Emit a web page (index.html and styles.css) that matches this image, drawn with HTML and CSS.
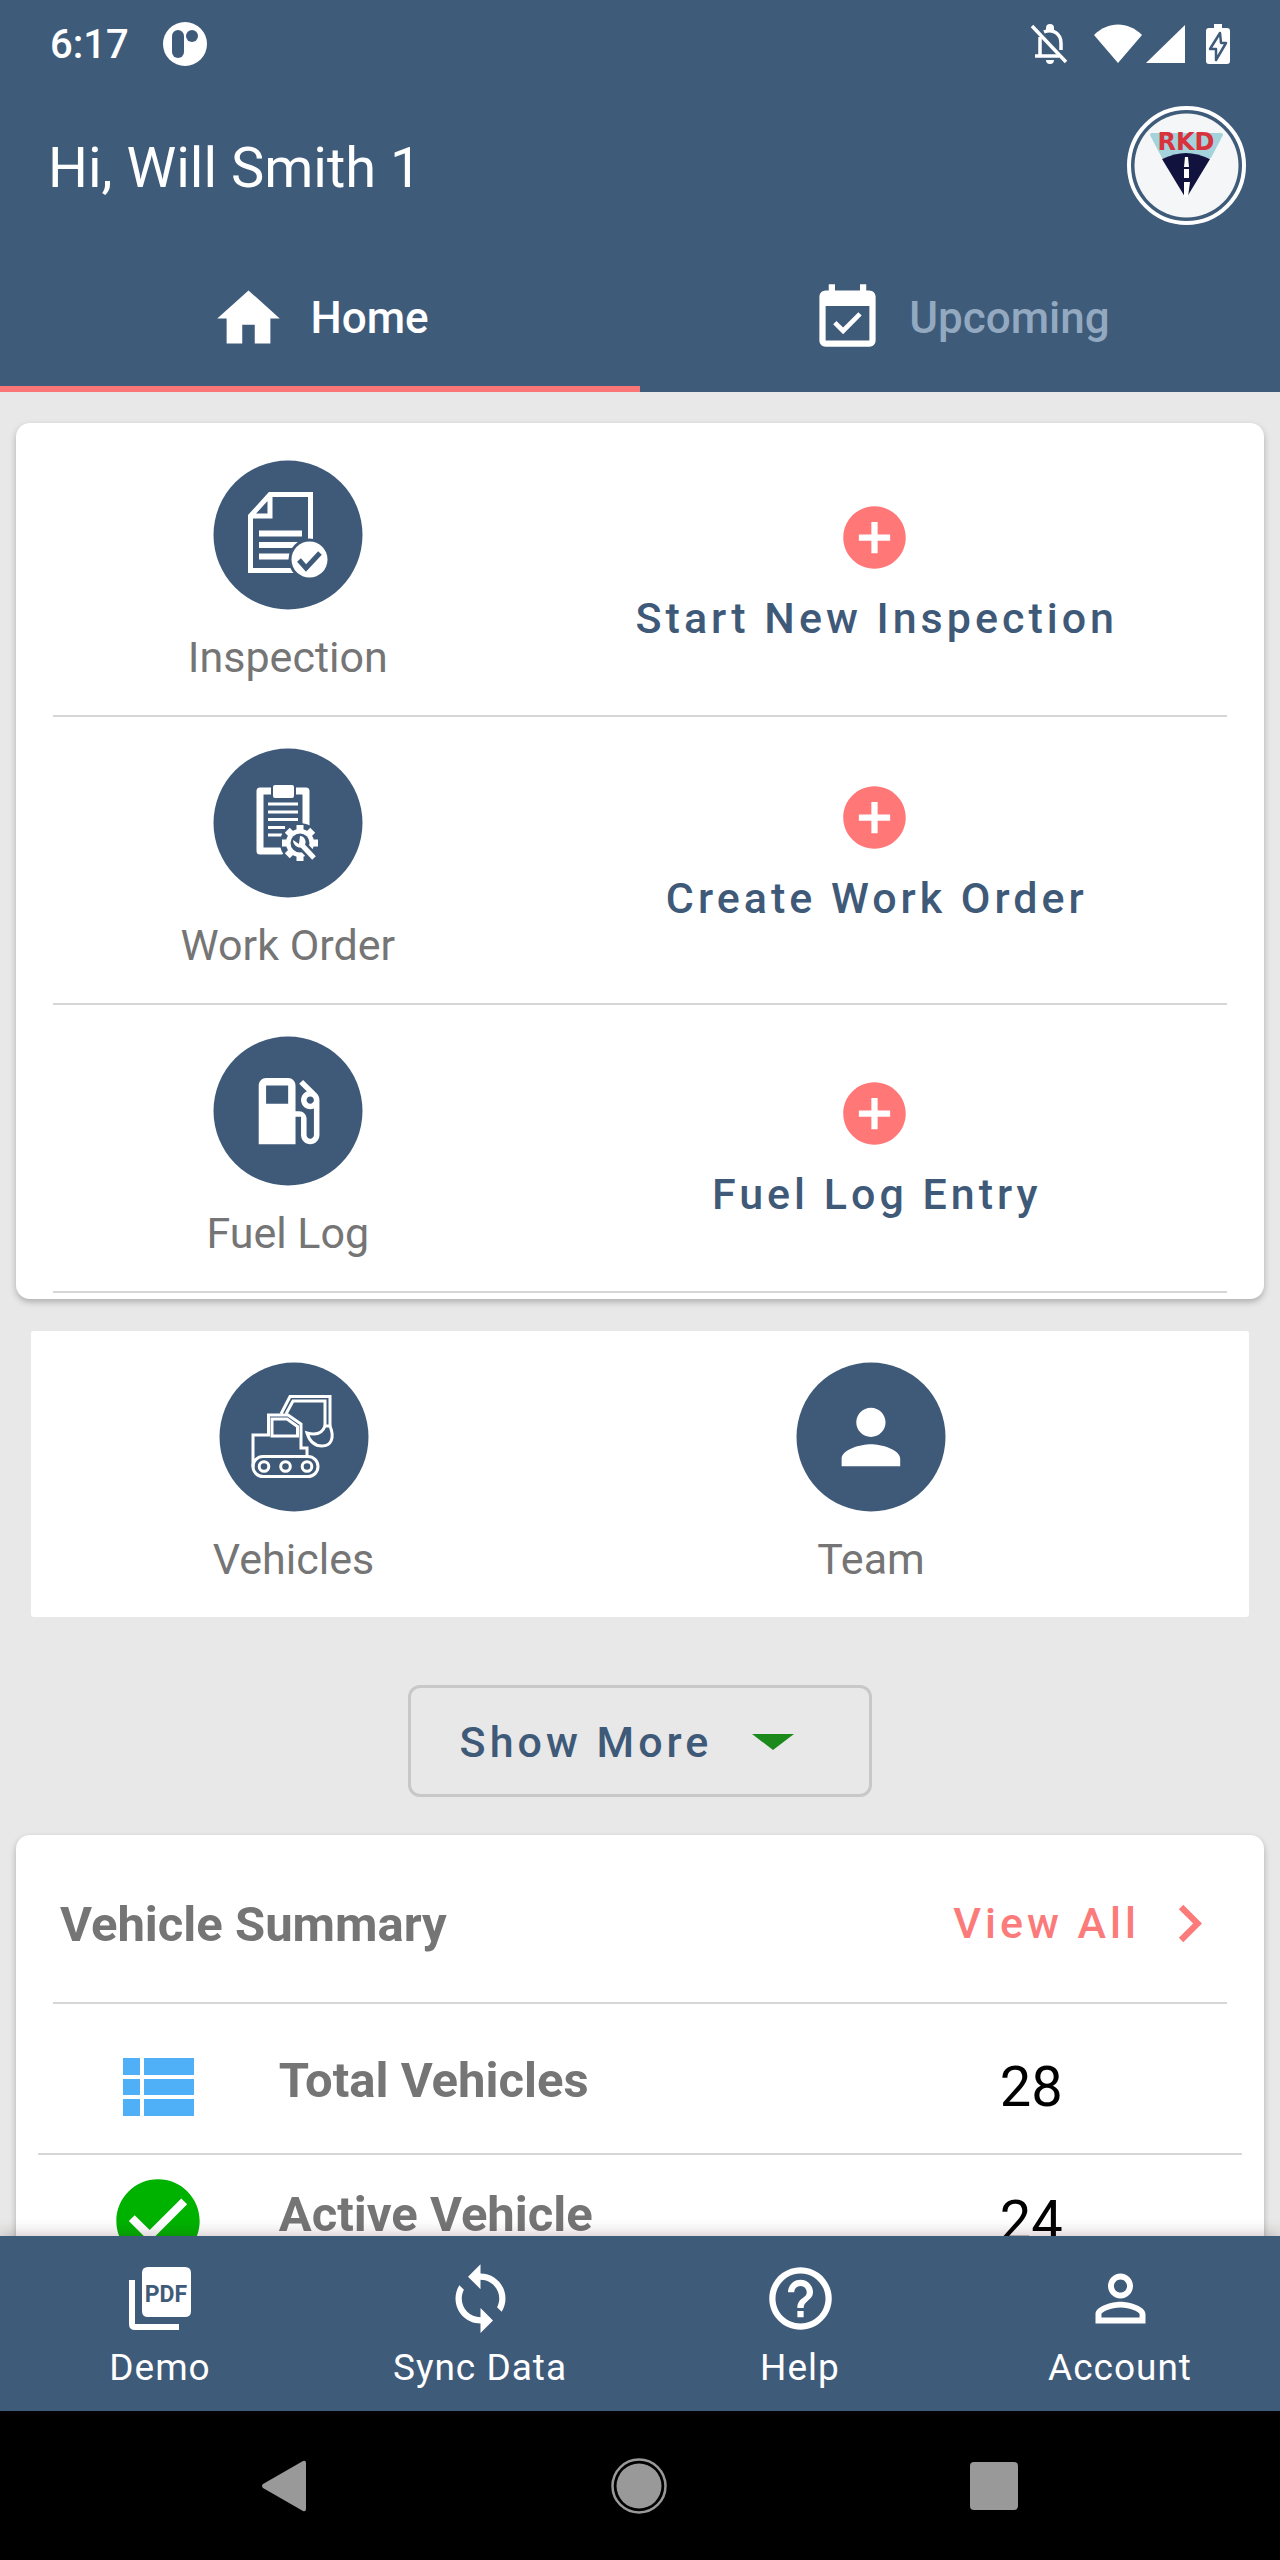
FILE: index.html
```html
<!DOCTYPE html>
<html lang="en">
<head>
<meta charset="utf-8">
<meta name="viewport" content="width=device-width, initial-scale=1">
<title>Fleet Home</title>
<link rel="stylesheet" href="styles.css">
</head>
<body>
<div class="screen">
  <header class="header">
    <div class="status">
      <div class="status-side">
        <span class="time">6:17</span>
        <svg width="44" height="44" viewBox="0 0 44 44" aria-hidden="true"><circle cx="22" cy="22" r="22" fill="#fff"/><rect x="9" y="8" width="12" height="28" rx="6" fill="#3f5b7a"/><circle cx="29" cy="14" r="6" fill="#3f5b7a"/></svg>
      </div>
      <div class="status-side status-icons">
        <svg width="38" height="40" viewBox="0 0 38 40" fill="none" stroke="#fff" stroke-width="3.5" aria-hidden="true"><path d="M2 2l34 36"/><path d="M10 13v18M5 32h24M14 8c9-4 17 2 17 11v7"/><path d="M16 4a4 4 0 0 1 8 0v3h-8zM16 36h8a4 4 0 0 1-8 0z" fill="#fff" stroke="none"/></svg>
        <svg class="wifi" width="48" height="40" viewBox="0 0 48 40" aria-hidden="true"><path d="M24 39L0 11C14-3 34-3 48 11z" fill="#fff"/></svg>
        <svg width="40" height="40" viewBox="0 0 40 40" aria-hidden="true"><path d="M39 1v38H0z" fill="#fff"/></svg>
        <svg class="battery" width="24" height="40" viewBox="0 0 24 40" aria-hidden="true"><path d="M8 0h8v4h5a3 3 0 0 1 3 3v30a3 3 0 0 1-3 3H3a3 3 0 0 1-3-3V7a3 3 0 0 1 3-3h5z" fill="#fff"/><path d="M14 9L4 25h6v11L20 19h-5z" fill="#fff" stroke="#3f5b7a" stroke-width="2.5" stroke-linejoin="round"/></svg>
      </div>
    </div>
    <div class="appbar">
      <h1 class="greeting">Hi, Will Smith 1</h1>
      <a class="avatar" href="#profile" aria-label="Profile">
        <svg width="119" height="119" viewBox="0 0 119 119" aria-hidden="true"><circle cx="59.500" cy="59.500" r="57.500" fill="none" stroke="#fff" stroke-width="4"/><circle cx="59.500" cy="59.500" r="52" fill="#f5f6f7"/><path d="M23 29q0-2 2-2h69q2 0 2 2L84 52H35z" fill="#a5d3dc"/><path d="M35 53q13-6 24-6t24 6L60 91h-2z" fill="#12123f"/><path d="M58 51h3l1 10h-5zM57 63h5v9h-5zM57 76h6l-2 15h-4z" fill="#fff"/><text class="logo-text" x="59" y="44" text-anchor="middle">RKD</text></svg>
      </a>
    </div>
    <nav class="tabs" aria-label="Sections">
      <a class="tab tab-active" href="#home" aria-current="page">
        <svg class="icon" viewBox="0 0 24 24" aria-hidden="true"><path d="M10 20v-6h4v6h5v-8h3L12 3 2 12h3v8z"/></svg>Home</a>
      <a class="tab" href="#upcoming">
        <svg class="icon" viewBox="0 0 24 24" aria-hidden="true"><path d="M16.530 11.060L15.470 10l-4.880 4.880-2.120-2.120-1.060 1.060L10.590 17l5.940-5.940zM19 3h-1V1h-2v2H8V1H6v2H5c-1.110 0-1.990.9-1.990 2L3 19c0 1.100.89 2 2 2h14c1.100 0 2-.9 2-2V5c0-1.100-.9-2-2-2zm0 16H5V8h14v11z"/></svg>Upcoming</a>
    </nav>
  </header>

  <main class="content">
    <section class="card actions">
      <div class="action-row">
        <a class="item" href="#inspection">
          <svg class="disc" viewBox="0 0 150 150" aria-hidden="true"><circle cx="75" cy="75" r="74.500" fill="#3f5a78"/><g fill="none" stroke="#fff" stroke-width="5"><path d="M97.500 79V34.500H57L37.500 56v54.500H82M57 34.500V56H37.500"/><path d="M46 73.500h43M46 85h39M46 96.500h32" stroke-width="6"/></g><circle cx="96.500" cy="99.500" r="21" fill="#3f5a78"/><circle cx="96.500" cy="99.500" r="18" fill="#fff"/><path d="M86 100l7 8 14-15" fill="none" stroke="#3f5a78" stroke-width="5"/></svg>
          Inspection</a>
        <button class="action" type="button">
          <svg class="icon" viewBox="0 0 24 24" aria-hidden="true"><path d="M12 2C6.480 2 2 6.480 2 12s4.480 10 10 10 10-4.480 10-10S17.520 2 12 2zm5 11h-4v4h-2v-4H7v-2h4V7h2v4h4v2z"/></svg>
          <span>Start New Inspection</span></button>
      </div>
      <div class="action-row">
        <a class="item" href="#work-order">
          <svg class="disc" viewBox="0 0 150 150" aria-hidden="true"><circle cx="75" cy="75" r="74.500" fill="#3f5a78"/><path d="M93 77V43H47v60h21" fill="none" stroke="#fff" stroke-width="7" stroke-linejoin="round" stroke-linecap="round"/><rect x="58" y="35" width="25" height="17" fill="#3f5a78"/><rect x="60" y="37" width="21" height="13" rx="2" fill="#fff"/><path d="M55 56h30M55 64h30M55 71.500h30M55 79.500h17M55 87h14" stroke="#fff" stroke-width="3"/><circle cx="87" cy="95" r="20" fill="#3f5a78"/><g stroke="#fff" stroke-width="7"><path d="M87 77v36M69 95h36M74.300 82.300l25.400 25.400M99.700 82.300l-25.400 25.400"/></g><circle cx="87" cy="95" r="14" fill="#fff"/><circle cx="87" cy="95" r="9.500" fill="#3f5a78"/><path d="M87 95l13 14" stroke="#3f5a78" stroke-width="10"/><path d="M87 95l14 15" stroke="#fff" stroke-width="5"/><path d="M80 92l6 4 1-8a6 6 0 0 1 4 10c-4 4-11 0-11-6z" fill="#fff"/></svg>
          Work Order</a>
        <button class="action action-raised" type="button">
          <svg class="icon" viewBox="0 0 24 24" aria-hidden="true"><path d="M12 2C6.480 2 2 6.480 2 12s4.480 10 10 10 10-4.480 10-10S17.520 2 12 2zm5 11h-4v4h-2v-4H7v-2h4V7h2v4h4v2z"/></svg>
          <span>Create Work Order</span></button>
      </div>
      <div class="action-row">
        <a class="item" href="#fuel-log">
          <svg class="disc" viewBox="0 0 150 150" aria-hidden="true"><circle cx="75" cy="75" r="74.500" fill="#3f5a78"/><path transform="translate(31 31) scale(3.680)" fill="#fff" d="M19.770 7.230l.01-.01-3.720-3.720L15 4.560l2.110 2.110c-.94.36-1.610 1.260-1.610 2.330 0 1.380 1.120 2.500 2.500 2.500.36 0 .69-.08 1-.21v7.210c0 .55-.45 1-1 1s-1-.45-1-1V14c0-1.100-.9-2-2-2h-1V5c0-1.100-.9-2-2-2H6c-1.100 0-2 .9-2 2v16h10v-7.500h1.500v5c0 1.380 1.120 2.500 2.500 2.500s2.500-1.120 2.500-2.500V9c0-.69-.28-1.320-.73-1.770zM12 10H6V5h6v5zm6 0c-.55 0-1-.45-1-1s.45-1 1-1 1 .45 1 1-.45 1-1 1z"/></svg>
          Fuel Log</a>
        <button class="action" type="button">
          <svg class="icon" viewBox="0 0 24 24" aria-hidden="true"><path d="M12 2C6.480 2 2 6.480 2 12s4.480 10 10 10 10-4.480 10-10S17.520 2 12 2zm5 11h-4v4h-2v-4H7v-2h4V7h2v4h4v2z"/></svg>
          <span>Fuel Log Entry</span></button>
      </div>
    </section>

    <section class="shortcuts">
      <a class="item" href="#vehicles">
        <svg class="disc" viewBox="0 0 150 150" aria-hidden="true"><circle cx="75" cy="75" r="74.500" fill="#3f5a78"/><g fill="none" stroke="#fff" stroke-width="3"><path d="M34 105V73h15.500V53H69l13 9v24h6v8.500"/><path d="M53 57h15l10.500 7.500V74H53z"/><path d="M62 52l9-17.500h40V64M67 52l7-13h32v25"/><path d="M88 71q14 4 18-7h5c5 12 1 20-8 20q-11 0-15-13z"/><rect x="34" y="94.500" width="65" height="20" rx="10"/><circle cx="45" cy="104.500" r="4.800"/><circle cx="66.500" cy="104.500" r="4.800"/><circle cx="88" cy="104.500" r="4.800"/></g></svg>
        Vehicles</a>
      <a class="item" href="#team">
        <svg class="disc" viewBox="0 0 150 150" aria-hidden="true"><circle cx="75" cy="75" r="74.500" fill="#3f5a78"/><path transform="translate(31 31) scale(3.660)" fill="#fff" d="M12 12c2.210 0 4-1.790 4-4s-1.790-4-4-4-4 1.790-4 4 1.790 4 4 4zm0 2c-2.670 0-8 1.340-8 4v2h16v-2c0-2.660-5.330-4-8-4z"/></svg>
        Team</a>
    </section>

    <button class="more" type="button">Show More
      <svg width="42" height="16" viewBox="0 0 42 16" aria-hidden="true"><path d="M0 0h42L21 16z" fill="#1b8a1b"/></svg></button>

    <section class="card summary">
      <div class="summary-head">
        <h2 class="summary-title">Vehicle Summary</h2>
        <a class="view-all" href="#all">View All
          <svg class="icon" viewBox="0 0 24 24" aria-hidden="true"><path d="M10 6L8.590 7.410 13.170 12l-4.580 4.590L10 18l6-6z"/></svg></a>
      </div>
      <table class="stats">
        <tr>
          <td class="stat-icon"><svg width="71" height="58" viewBox="0 0 71 58" aria-hidden="true"><path d="M0 0h17v17H0zM21 0h50v17H21zM0 21h17v16H0zM21 21h50v16H21zM0 41h17v17H0zM21 41h50v17H21z" fill="#50b0f7"/></svg></td>
          <th class="stat-name" scope="row">Total Vehicles</th>
          <td class="stat-value">28</td>
        </tr>
        <tr>
          <td class="stat-icon"><svg width="100" height="100" viewBox="0 0 24 24" aria-hidden="true"><path fill="#00b200" d="M12 2C6.480 2 2 6.480 2 12s4.480 10 10 10 10-4.480 10-10S17.520 2 12 2zm-2 15l-5-5 1.410-1.410L10 14.170l7.590-7.590L19 8l-9 9z"/></svg></td>
          <th class="stat-name" scope="row">Active Vehicle</th>
          <td class="stat-value">24</td>
        </tr>
      </table>
    </section>
  </main>

  <nav class="bottom" aria-label="Main">
    <a class="bottom-item" href="#demo">
      <svg class="icon" viewBox="0 0 75 75" aria-hidden="true"><path d="M25 6h37q6 0 6 6v38q0 6-6 6H25q-6 0-6-6V12q0-6 6-6zM6 19h6v44h44v6H12q-6 0-6-6z"/><text class="pdf-text" x="43" y="41" text-anchor="middle">PDF</text></svg>
      Demo</a>
    <a class="bottom-item" href="#sync">
      <svg class="icon" viewBox="0 0 24 24" aria-hidden="true"><path d="M12 4V1L8 5l4 4V6c3.310 0 6 2.690 6 6 0 1.010-.25 1.970-.7 2.800l1.460 1.460C19.540 15.030 20 13.570 20 12c0-4.420-3.580-8-8-8zm0 14c-3.310 0-6-2.690-6-6 0-1.010.25-1.970.7-2.800L5.240 7.740C4.460 8.970 4 10.430 4 12c0 4.420 3.580 8 8 8v3l4-4-4-4v3z"/></svg>
      Sync Data</a>
    <a class="bottom-item" href="#help">
      <svg class="icon" viewBox="0 0 24 24" aria-hidden="true"><path d="M11 18h2v-2h-2v2zm1-16C6.480 2 2 6.480 2 12s4.480 10 10 10 10-4.480 10-10S17.520 2 12 2zm0 18c-4.410 0-8-3.590-8-8s3.590-8 8-8 8 3.590 8 8-3.590 8-8 8zm0-14c-2.210 0-4 1.790-4 4h2c0-1.100.9-2 2-2s2 .9 2 2c0 2-3 1.750-3 5h2c0-2.250 3-2.500 3-5 0-2.210-1.790-4-4-4z"/></svg>
      Help</a>
    <a class="bottom-item" href="#account">
      <svg class="icon" viewBox="0 0 24 24" aria-hidden="true"><path d="M12 5.900c1.160 0 2.100.94 2.100 2.100s-.94 2.100-2.100 2.100S9.900 9.160 9.900 8s.94-2.100 2.100-2.100m0 9c2.970 0 6.100 1.460 6.100 2.100v1.100H5.900V17c0-.64 3.130-2.100 6.100-2.100M12 4C9.790 4 8 5.790 8 8s1.790 4 4 4 4-1.790 4-4-1.790-4-4-4zm0 9c-2.670 0-8 1.340-8 4v3h16v-3c0-2.660-5.330-4-8-4z"/></svg>
      Account</a>
  </nav>

  <div class="system">
    <button type="button" aria-label="Back"><svg width="58" height="58" viewBox="0 0 58 58" aria-hidden="true"><path d="M51 6v46q0 3-3 2L8 31q-2-2 0-4L48 4q3-1 3 2z" fill="#999"/></svg></button>
    <button type="button" aria-label="Home"><svg width="58" height="58" viewBox="0 0 58 58" aria-hidden="true"><circle cx="29" cy="29" r="26.500" fill="none" stroke="#999" stroke-width="2.500"/><circle cx="29" cy="29" r="22.500" fill="#999"/></svg></button>
    <button type="button" aria-label="Recent apps"><svg width="58" height="58" viewBox="0 0 58 58" aria-hidden="true"><rect x="5" y="5" width="48" height="48" rx="4" fill="#999"/></svg></button>
  </div>
</div>
</body>
</html>
```
FILE: styles.css
```css
* {
  box-sizing: border-box;
}

body {
  margin: 0;
  font-family: Roboto, "Liberation Sans", sans-serif;
  background: #e7e8e7;
}

a {
  color: inherit;
  text-decoration: none;
}

button {
  margin: 0;
  padding: 0;
  border: 0;
  background: none;
  font: inherit;
  color: inherit;
}

svg {
  display: block;
  flex: none;
}

.screen {
  display: flex;
  flex-direction: column;
  height: 100vh;
}

.icon {
  width: 75px;
  height: 75px;
  fill: currentColor;
}

/* Header */

.header {
  flex: none;
  background: #3f5b7a;
  color: #fff;
}

.status {
  display: flex;
  justify-content: space-between;
  align-items: center;
  height: 88px;
  padding: 0 50px;
}

.status-side {
  display: flex;
  align-items: center;
  gap: 34px;
}

.status-icons {
  gap: 4px;
}

.wifi {
  margin-left: 22px;
}

.battery {
  margin-left: 16px;
}

.time {
  font-size: 40px;
  line-height: 50px;
  padding-top: 2px;
  font-weight: 500;
}

.appbar {
  display: flex;
  justify-content: space-between;
  align-items: center;
  height: 156px;
  padding: 0 34px 2px 48px;
}

.greeting {
  margin: 0;
  padding-top: 6px;
  font-size: 56px;
  line-height: 66px;
  font-weight: 400;
}

.logo-text {
  font: bold 24px "DejaVu Sans", sans-serif;
  fill: #d8323c;
}

.tabs {
  display: grid;
  grid-template-columns: 1fr 1fr;
}

.tab {
  display: flex;
  justify-content: center;
  align-items: center;
  gap: 24px;
  height: 148px;
  font-size: 44px;
  font-weight: 500;
  color: #93a9c0;
}

.tab-active {
  color: #fff;
  box-shadow: inset 0 -6px #fb7676;
}

.tab .icon {
  color: #fff;
}

/* Scrolling content */

.content {
  flex: 1;
  min-height: 0;
  display: flex;
  flex-direction: column;
  overflow: hidden auto;
  scrollbar-width: none;
  padding: 31px 16px 0;
}

.card {
  flex: none;
  background: #fff;
  border-radius: 14px;
  box-shadow: 0 3px 6px rgba(0, 0, 0, 0.25);
}

.actions {
  padding: 6px 37px;
}

.action-row {
  display: grid;
  grid-template-columns: 2fr 3fr;
  border-bottom: 2px solid #d6d6d6;
}

.item {
  display: flex;
  flex-direction: column;
  align-items: center;
  gap: 22px;
  height: 286px;
  padding-top: 31px;
  font-size: 43px;
  line-height: 50px;
  color: #757575;
}

.disc {
  width: 150px;
  height: 150px;
}

.action {
  display: flex;
  flex-direction: column;
  justify-content: center;
  align-items: center;
  gap: 18px;
  padding-bottom: 2px;
  font-size: 43px;
  line-height: 50px;
  font-weight: 500;
  letter-spacing: 4px;
  text-indent: 4px;
  color: #3f5a78;
}

.action-raised {
  padding-bottom: 18px;
}

.action .icon {
  color: #ff7777;
}

.shortcuts {
  flex: none;
  display: grid;
  grid-template-columns: 5fr 6fr;
  margin: 32px 15px 68px;
  padding-right: 63px;
  background: #fff;
  border-radius: 3px;
}

.more {
  flex: none;
  align-self: center;
  display: flex;
  align-items: center;
  gap: 40px;
  height: 112px;
  margin-bottom: 38px;
  padding: 2px 75px 0 49px;
  border: 3px solid #c8c8c8;
  border-radius: 12px;
  font-size: 43px;
  font-weight: 500;
  letter-spacing: 4px;
  color: #3f5a78;
}

/* Vehicle summary */

.summary-head {
  display: flex;
  justify-content: space-between;
  align-items: center;
  height: 169px;
  margin: 0 37px;
  padding: 9px 0 0 7px;
  border-bottom: 2px solid #d6d6d6;
}

.summary-title {
  margin: 0;
  padding-top: 4px;
  font-size: 49px;
  line-height: 58px;
  font-weight: 700;
  color: #757575;
}

.view-all {
  display: flex;
  align-items: center;
  gap: 12px;
  font-size: 43px;
  font-weight: 500;
  letter-spacing: 4px;
  color: #fb7b7b;
}

.stats {
  width: calc(100% - 44px);
  margin: 0 22px;
  border-collapse: collapse;
  table-layout: fixed;
}

.stats td,
.stats th {
  height: 132px;
  padding: 0;
}

.stats th {
  padding-bottom: 12px;
}

.stats tr:first-child > * {
  height: 150px;
  padding-top: 16px;
  border-bottom: 2px solid #d6d6d6;
}

.stat-icon {
  width: 20%;
}

.stat-icon svg {
  margin: 0 auto;
}

.stat-name {
  font-size: 49px;
  line-height: 58px;
  font-weight: 700;
  text-align: left;
  color: #757575;
}

.stat-value {
  width: 35%;
  font-size: 56px;
  line-height: 66px;
  text-align: center;
  color: #000;
}

/* Bottom bars */

.bottom {
  flex: none;
  display: grid;
  grid-template-columns: repeat(4, 1fr);
  height: 175px;
  background: #3f5b7a;
  color: #fff;
  box-shadow: 0 -2px 14px rgba(60, 20, 30, 0.25);
  z-index: 1;
}

.bottom-item {
  display: flex;
  flex-direction: column;
  align-items: center;
  gap: 10px;
  padding-top: 25px;
  font-size: 37px;
  line-height: 44px;
  letter-spacing: 1px;
}

.pdf-text {
  font: 700 23px Roboto, sans-serif;
  letter-spacing: 0;
  fill: #3f5b7a;
}

.system {
  flex: none;
  display: flex;
  justify-content: space-between;
  align-items: center;
  height: 149px;
  padding: 0 257px 0 255px;
  background: #000;
}
```
